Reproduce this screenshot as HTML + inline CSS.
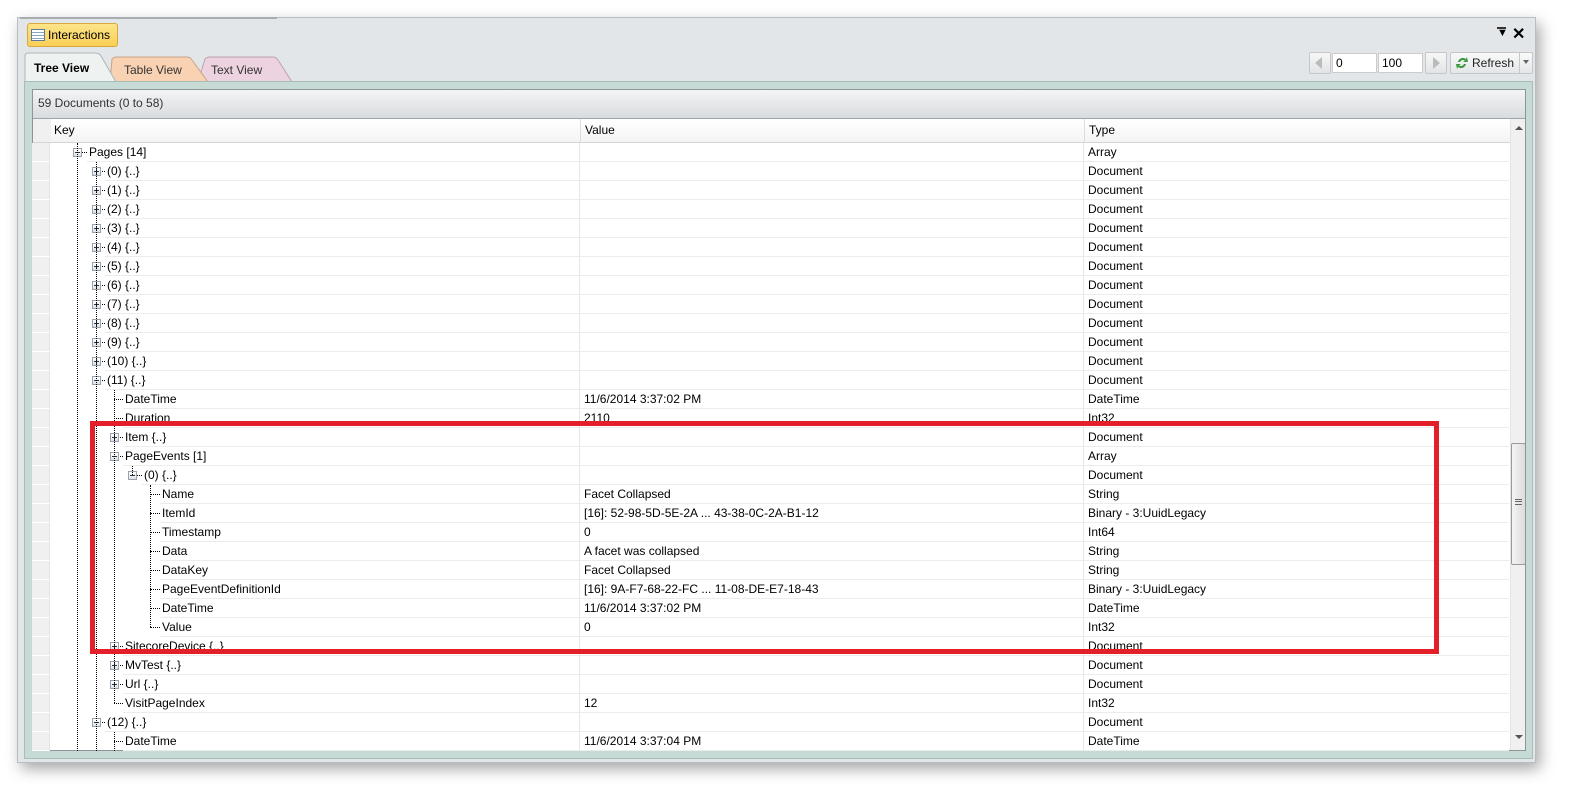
<!DOCTYPE html>
<html><head><meta charset="utf-8">
<style>
*{margin:0;padding:0;box-sizing:border-box}
body{width:1584px;height:811px;background:#fff;position:relative;overflow:hidden;font-family:"Liberation Sans",sans-serif;font-size:12px;color:#000}
.a{position:absolute}
.win{left:17px;top:17px;width:1519px;height:746px;background:#e3e6e9;border:1px solid #b9bdc2;box-shadow:4px 6px 14px rgba(0,0,0,.35)}
.row{position:absolute;left:0;height:19px;width:1477px}
.rh{position:absolute;left:0;top:0;width:18px;height:19px;background:#f0f0f0;border-bottom:1px solid #fff;border-right:1px solid #e2e2e2}
.t{position:absolute;top:0;height:19px;line-height:18px;white-space:nowrap;border-bottom:1px solid #ececec;background:#fff;z-index:1}
.v{position:absolute;left:547px;top:0;width:504px;height:19px;line-height:18px;padding-left:4px;border-left:1px solid #e6e6e6;border-bottom:1px solid #ececec}
.ty{position:absolute;left:1051px;top:0;width:426px;height:19px;line-height:18px;padding-left:4px;border-left:1px solid #e6e6e6;border-bottom:1px solid #ececec}
.vl{position:absolute;width:0;border-left:1px dotted #000}
.hl{position:absolute;height:0;border-top:1px dotted #000}
.bx{position:absolute;width:9px;height:9px;border:1px solid #9aa3ad;background:linear-gradient(#fff,#dde2e8);z-index:2}
.bx:before{content:"";position:absolute;left:1px;top:3px;width:5px;height:1px;background:#333}
.bx.p:after{content:"";position:absolute;left:3px;top:1px;width:1px;height:5px;background:#333}
</style></head><body>
<div class="a win"></div>
<div class="a" style="left:20px;top:17px;width:257px;height:2px;background:#a9adb2"></div>
<div class="a" style="left:27px;top:23px;width:91px;height:24px;background:linear-gradient(#fde58a,#f9cf55);border:1px solid #d7a83c;border-radius:3px;line-height:22px;padding-left:20px;font-size:12px">Interactions</div>
<div class="a" style="left:31px;top:29px;width:14px;height:12px;border:1px solid #5a7aa0;background:repeating-linear-gradient(#fff 0 2px,#8aa4c4 2px 3px)"></div>
<div class="a" style="left:1497px;top:27px;font-size:11px">&#9660;</div>
<div class="a" style="left:1497px;top:27px;width:9px;height:2px;background:#333"></div>
<div class="a" style="left:1512px;top:24px;font-size:16px;font-weight:bold">&#x2715;</div>
<svg class="a" style="left:20px;top:50px" width="290" height="34">
<path d="M178 32 L185 9 Q187 7 190 7 L253 7 Q256 7 258 10 L272 32 Z" fill="#ecd3df" stroke="#b9a3ae"/>
<path d="M90 32 L92 9 Q94 7 97 7 L167 7 Q170 7 172 10 L188 32 Z" fill="#f8d2b2" stroke="#c9a386"/>
<path d="M5 32 L5 6 Q5 3 9 3 L75 3 Q79 3 81 6 L96 32 Z" fill="#eef3f1" stroke="#aab8b4"/>
</svg>
<div class="a" style="left:34px;top:61px;font-weight:bold;font-size:12px">Tree View</div>
<div class="a" style="left:124px;top:63px;color:#333">Table View</div>
<div class="a" style="left:211px;top:63px;color:#333">Text View</div>
<div class="a" style="left:1309px;top:52px;width:22px;height:22px;border:1px solid #c4c8cc;border-radius:2px;background:linear-gradient(#f7f7f7,#e2e4e6)"></div>
<div class="a" style="left:1315px;top:57px;width:0;height:0;border-top:6px solid transparent;border-bottom:6px solid transparent;border-right:7px solid #bbb"></div>
<div class="a" style="left:1332px;top:53px;width:45px;height:20px;background:#fff;border:1px solid #ccc;padding-left:3px;line-height:18px">0</div>
<div class="a" style="left:1378px;top:53px;width:45px;height:20px;background:#fff;border:1px solid #ccc;padding-left:3px;line-height:18px">100</div>
<div class="a" style="left:1425px;top:52px;width:22px;height:22px;border:1px solid #c4c8cc;border-radius:2px;background:linear-gradient(#f7f7f7,#e2e4e6)"></div>
<div class="a" style="left:1433px;top:57px;width:0;height:0;border-top:6px solid transparent;border-bottom:6px solid transparent;border-left:7px solid #bbb"></div>
<div class="a" style="left:1450px;top:52px;width:83px;height:22px;border:1px solid #c4c8cc;border-radius:2px;background:linear-gradient(#f9f9f9,#e4e6e8);line-height:20px;padding-left:21px;color:#222">Refresh</div>
<div class="a" style="left:1519px;top:53px;width:1px;height:20px;background:#c4c8cc"></div>
<div class="a" style="left:1523px;top:60px;width:0;height:0;border-left:3px solid transparent;border-right:3px solid transparent;border-top:4px solid #666"></div>
<svg class="a" style="left:1455px;top:55px" width="14" height="16"><path d="M3 7 A5 5 0 0 1 11 4 L12 2 L13 7 L8 7 L10 5.5 A3.5 3.5 0 0 0 5 7Z" fill="#3c9a3c"/><path d="M11 9 A5 5 0 0 1 3 12 L2 14 L1 9 L6 9 L4 10.5 A3.5 3.5 0 0 0 9 9Z" fill="#3c9a3c"/></svg>
<div class="a" style="left:24px;top:81px;width:1509px;height:678px;background:#c6dbd5;border:1px solid #a9bdb8"></div>
<div class="a" style="left:32px;top:89px;width:1494px;height:662px;background:#fff;border:1px solid #8f9499;overflow:hidden">
 <div class="a" style="left:0;top:0;width:1494px;height:29px;background:linear-gradient(#f3f4f5,#d9dcdf);border-bottom:1px solid #a0a4a8;line-height:27px;padding-left:5px;color:#333">59 Documents (0 to 58)</div>
 <div class="a" style="left:0;top:29px;width:1477px;height:24px;background:linear-gradient(#fff,#f4f4f4);border-bottom:1px solid #d5d5d5;line-height:23px">
  <div class="a" style="left:0;top:0;width:18px;height:23px;background:#f0f0f0"></div>
  <div class="a" style="left:21px">Key</div>
  <div class="a" style="left:547px;top:0;height:23px;border-left:1px solid #ddd;padding-left:4px">Value</div>
  <div class="a" style="left:1051px;top:0;height:23px;border-left:1px solid #ddd;padding-left:4px">Type</div>
 </div>
 <div class="a" style="left:1477px;top:29px;width:17px;height:633px;background:#f0f0f0;border-left:1px solid #e4e4e4"></div>
 <div class="a" style="left:1482px;top:36px;width:0;height:0;border-left:4px solid transparent;border-right:4px solid transparent;border-bottom:4px solid #555"></div>
 <div class="a" style="left:1482px;top:645px;width:0;height:0;border-left:4px solid transparent;border-right:4px solid transparent;border-top:4px solid #555"></div>
 <div class="a" style="left:1478px;top:353px;width:15px;height:122px;border:1px solid #9a9a9a;border-radius:2px;background:linear-gradient(90deg,#f4f4f4,#dcdcdc)"></div>
 <div class="a" style="left:1482px;top:409px;width:7px;height:6px;border-top:1px solid #666;border-bottom:1px solid #666"></div>
 <div class="a" style="left:1482px;top:411px;width:7px;height:1px;background:#666"></div>
</div>
<div class="a" id="tree" style="left:32px;top:143px;width:1477px;height:608px;overflow:hidden"></div>
<div class="a" style="left:90px;top:421px;width:1349px;height:233px;border:5px solid #e3202a;z-index:10"></div>
<script>
var R=[["Pages [14]",1,"m","","Array"]];
for(var i=0;i<=10;i++)R.push(["("+i+") {..}",2,"p","","Document"]);
R.push(["(11) {..}",2,"m","","Document"],["DateTime",3,"","11/6/2014 3:37:02 PM","DateTime"],["Duration",3,"","2110","Int32"],["Item {..}",3,"p","","Document"],["PageEvents [1]",3,"m","","Array"],["(0) {..}",4,"m","","Document"],["Name",5,"","Facet Collapsed","String"],["ItemId",5,"","[16]: 52-98-5D-5E-2A ... 43-38-0C-2A-B1-12","Binary - 3:UuidLegacy"],["Timestamp",5,"","0","Int64"],["Data",5,"","A facet was collapsed","String"],["DataKey",5,"","Facet Collapsed","String"],["PageEventDefinitionId",5,"","[16]: 9A-F7-68-22-FC ... 11-08-DE-E7-18-43","Binary - 3:UuidLegacy"],["DateTime",5,"","11/6/2014 3:37:02 PM","DateTime"],["Value",5,"","0","Int32"],["SitecoreDevice {..}",3,"p","","Document"],["MvTest {..}",3,"p","","Document"],["Url {..}",3,"p","","Document"],["VisitPageIndex",3,"","12","Int32"],["(12) {..}",2,"m","","Document"],["DateTime",3,"","11/6/2014 3:37:04 PM","DateTime"]);
var LX={1:45,2:64,3:82,4:100,5:118},TX={1:57,2:75,3:93,4:112,5:130};
var h="";
R.forEach(function(r,k){var y=k*19,c=y+9,L=r[1];
h+='<div class="row" style="top:'+y+'px"><div class="rh"></div><div class="t" style="left:'+(TX[L]-2)+'px;width:'+(547-TX[L]+2)+'px;padding-left:2px">'+r[0]+'</div><div class="v">'+r[3]+'</div><div class="ty">'+r[4]+'</div></div>';
h+='<div class="hl" style="left:'+LX[L]+'px;top:'+c+'px;width:'+(TX[L]-LX[L]-2)+'px;z-index:2"></div>';
if(r[2])h+='<div class="bx '+r[2]+'" style="left:'+(LX[L]-4)+'px;top:'+(c-4)+'px"></div>';
});
function vl(x,a,b){h+='<div class="vl" style="left:'+x+'px;top:'+a+'px;height:'+(b-a)+'px;z-index:2"></div>';}
vl(45,0,608);vl(64,19,608);vl(82,247,560);vl(82,589,608);vl(100,323,332);vl(118,342,484);
document.getElementById('tree').innerHTML=h;
</script>
</body></html>
